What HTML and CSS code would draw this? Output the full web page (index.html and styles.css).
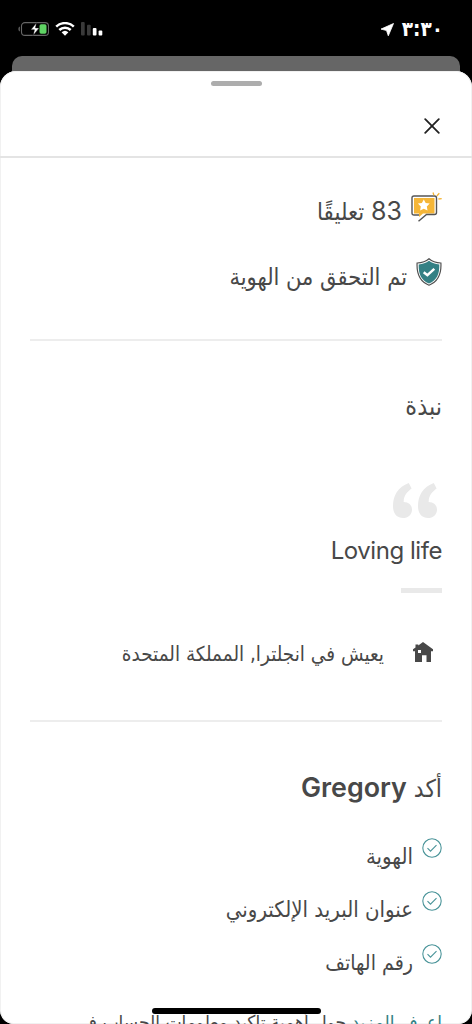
FILE: index.html
```
<!DOCTYPE html>
<html lang="ar" dir="rtl">
<head>
  <meta charset="UTF-8" />
  <meta name="viewport" content="width=device-width, initial-scale=1.0"/>
  <title>Gregory</title>
  <link rel="stylesheet" href="styles.css">
</head>
<body>
  <div class="status-bar" dir="ltr">
    <div class="status-left">
      <svg class="battery" width="31" height="14" viewBox="0 0 31 14">
        <path d="M2 4.500v5C.6 9 .3 8 .3 7S.6 5 2 4.500z" fill="#555"/>
        <rect x="3.500" y=".6" width="27" height="12.800" rx="3.500" fill="none" stroke="#666" stroke-width="1.100"/>
        <rect x="21.500" y="2.300" width="7" height="9.400" rx="1.600" fill="#5fd364"/>
        <path d="M18.500.8 12.800 7.800h3.600l-1.200 5.600 6-7.500h-3.700z" fill="#fff" stroke="#000" stroke-width=".5"/>
      </svg>
      <svg class="wifi" width="20" height="14" viewBox="0 0 20 14">
        <path d="M1.200 4.700a12.600 12.600 0 0 1 17.600 0M4.300 8a8.200 8.200 0 0 1 11.400 0" fill="none" stroke="#fff" stroke-width="2.500"/>
        <path d="M6.600 10.300a5 5 0 0 1 6.800 0L10 13.700z" fill="#fff"/>
      </svg>
      <svg class="signal" width="22" height="14" viewBox="0 0 22 14">
        <rect x="0" y="0" width="3.700" height="13.500" rx="1" fill="#3a3a3a"/>
        <rect x="6" y="2.800" width="3.700" height="10.700" rx="1" fill="#3a3a3a"/>
        <rect x="11.800" y="6" width="3.700" height="7.500" rx="1" fill="#fff"/>
        <rect x="17.600" y="8.500" width="3.700" height="5" rx="1" fill="#fff"/>
      </svg>
    </div>
    <div class="status-right">
      <svg class="location" width="13" height="13" viewBox="0 0 13 13"><path d="M12.500.5 0 6.100l5.500 1.400L7.300 12.800z" fill="#fff" stroke="#fff" stroke-width=".8" stroke-linejoin="round"/></svg>
      <span class="time">٣:٣٠</span>
    </div>
  </div>

  <div class="back-sheet"></div>

  <main class="sheet">
    <header class="sheet-header">
      <div class="grabber"></div>
      <button class="close" aria-label="إغلاق">
        <svg width="16" height="16" viewBox="0 0 16 16"><path d="M1.200 1.200l13.600 13.600M14.800 1.200 1.200 14.800" stroke="#222" stroke-width="1.800" stroke-linecap="round"/></svg>
      </button>
    </header>

    <section class="summary">
      <div class="summary-row">
        <svg class="review-icon" width="31" height="30" viewBox="0 0 31 30">
          <path d="M3 5h20.500v15.500H12l-4 3.500v-3.500H3z" fill="#f5b638"/>
          <path d="M8 22v0H3q-2 0-2-2V5q0-2 2-2h20.500q2 0 2 2V19.500q0 2-2 2H15.500L7.500 28.300" fill="none" stroke="#555" stroke-width="1.400"/>
          <path d="M12.800 6.400l1.900 3.600 4 .6-2.900 2.900.7 4-3.700-1.800-3.700 1.800.7-4-2.900-2.900 4-.6z" fill="#fff"/>
          <path d="M22 -.5l.9 2.800M28.300.2 25.800 3M30.700 5.600l-3.300.4" stroke="#f5b638" stroke-width="1.300"/>
        </svg>
        <span class="label reviews"><span class="num">83</span> تعليقًا</span>
      </div>
      <div class="summary-row">
        <svg class="shield-icon" width="26" height="28" viewBox="0 0 26 28">
          <path d="M13 .8c3 2.700 7 4 11.900 4.200C25.500 16 22.500 23.500 13 27.200 3.500 23.500.5 16 1.100 5 6 4.800 10 3.500 13 .8z" fill="#fff" stroke="#505050" stroke-width="1.200"/>
          <path d="M13 2.800c2.900 2.300 6.400 3.400 10.300 3.600.2 9.800-2.400 15.700-10.300 19-7.900-3.300-10.500-9.200-10.300-19C6.600 6.200 10.100 5.100 13 2.800z" fill="#348084"/>
          <path d="M7.700 14.200l3.700 3 6.900-6.300" fill="none" stroke="#fff" stroke-width="2.400"/>
        </svg>
        <span class="label verified">تم التحقق من الهوية</span>
      </div>
    </section>

    <section class="about">
      <h2 class="about-title">نبذة</h2>
      <svg class="quote-mark" width="45" height="36" viewBox="0 0 45 36">
        <path id="q" d="M15.800 0C5 4 0 12.500 0 23c0 8 4 12 10 12 5 0 9-3.600 9-8.300 0-5-3.600-7.600-8.300-7.800C10.500 13 14 9 18.600 5.500z" fill="#e9e9e9"/>
        <use href="#q" x="25"/>
      </svg>
      <p class="quote" dir="ltr">Loving life</p>
      <div class="quote-bar"></div>
      <div class="lives">
        <svg width="20" height="20" viewBox="0 0 20 20">
          <path d="M10 0 20 7.300V9.200h-2V20h-4.500v-6.700H9V20H2V9.200H0V7.300L2.500 5.500V2.500h2.800v1z" fill="#484848"/>
          <rect x="5" y="8" width="3" height="3" fill="#fff"/>
        </svg>
        <span class="label city">يعيش في انجلترا, المملكة المتحدة</span>
      </div>
    </section>

    <section class="confirmed">
      <h2 class="confirmed-title">أكد <span class="name">Gregory</span></h2>
      <ul class="checks">
        <li>
          <svg width="20" height="20" viewBox="0 0 20 20"><circle cx="10" cy="10" r="9.200"/><path d="M5.500 10.200l3 3 6-6"/></svg>
          <span class="label id">الهوية</span>
        </li>
        <li>
          <svg width="20" height="20" viewBox="0 0 20 20"><circle cx="10" cy="10" r="9.200"/><path d="M5.500 10.200l3 3 6-6"/></svg>
          <span class="label email">عنوان البريد الإلكتروني</span>
        </li>
        <li>
          <svg width="20" height="20" viewBox="0 0 20 20"><circle cx="10" cy="10" r="9.200"/><path d="M5.500 10.200l3 3 6-6"/></svg>
          <span class="label phone">رقم الهاتف</span>
        </li>
      </ul>
      <p class="learn"><a>اعرف المزيد</a> حول أهمية تأكيد معلومات الحساب في</p>
    </section>
  </main>

  <div class="home-indicator"></div>
</body>
</html>
```

FILE: styles.css
```
* {
  box-sizing: border-box;
}
body {
  font-family: "DejaVu Sans Condensed", "DejaVu Sans", sans-serif;
  background: #000;
  color: #484848;
  margin: 0;
  height: 1024px;
  overflow: hidden;
  position: relative;
}
h2, p, ul {
  margin: 0;
  padding: 0;
  font-weight: normal;
}
svg {
  display: block;
  flex: none;
}

/* status bar */
.status-bar {
  height: 56px;
  padding: 22px 29px 0 18px;
  display: flex;
  justify-content: space-between;
  align-items: flex-start;
}
.status-left {
  display: flex;
}
.wifi {
  margin-left: 6px;
}
.signal {
  margin-left: 6px;
}
.status-right {
  display: flex;
  gap: 8px;
}
.location {
  margin-top: 1px;
}
.time {
  color: #fff;
  font-size: 20.5px;
  font-weight: bold;
  line-height: 14px;
}

/* sheets */
.back-sheet {
  height: 15px;
  margin: 0 12px;
  background: #666;
  border-radius: 10px 10px 0 0;
}
.sheet {
  height: 953px;
  background: #fff;
  border-radius: 16px 16px 14px 14px;
  overflow: hidden;
  box-shadow: inset 0 0 0 1px #f1f1f1;
}
.sheet-header {
  height: 87px;
  border-bottom: 2px solid #e4e4e4;
  padding-top: 10px;
}
.grabber {
  width: 51px;
  height: 5px;
  border-radius: 3px;
  background: #adadad;
  margin: 0 auto;
}
.close {
  display: block;
  border: none;
  background: none;
  padding: 0;
  margin: 32px 32px 0 0;
}
section {
  margin: 0 30px;
}
.label {
  font-size: 22px;
  line-height: 30px;
  white-space: nowrap;
}

.summary {
  height: 183px;
  border-bottom: 2px solid #ededed;
  padding-top: 35px;
}
.summary-row {
  display: flex;
  gap: 9px;
  height: 66px;
}
.review-icon {
  overflow: visible;
}
.num {
  font-family: Inter, sans-serif;
  font-size: 25px;
  letter-spacing: -0.5px;
}
.reviews {
  font-size: 23.8px;
  margin-top: 3px;
}
.shield-icon {
  margin-top: -1px;
}
.verified {
  font-size: 23.4px;
  margin-top: 3px;
}

.about {
  height: 381px;
  border-bottom: 2px solid #ededed;
  padding-top: 51px;
}
.about-title {
  font-size: 25px;
  line-height: 30px;
}
.quote-mark {
  margin: 61px 4px 0 0;
}
.quote {
  font-family: Inter, sans-serif;
  font-size: 24px;
  letter-spacing: -0.45px;
  line-height: 30px;
  text-align: right;
  margin-top: 17px;
}
.quote-bar {
  width: 41px;
  height: 5px;
  background: #e9e9e9;
  margin-top: 22px;
}
.lives {
  display: flex;
  gap: 29px;
  padding: 49px 9px 0 0;
}
.city {
  font-size: 20.5px;
  margin-top: -3px;
}

.confirmed {
  padding-top: 50px;
}
.confirmed-title {
  font-size: 24.5px;
  line-height: 30px;
}
.name {
  font-family: Inter, sans-serif;
  font-size: 26.8px;
  font-weight: 600;
}
.checks {
  list-style: none;
  margin-top: 34px;
}
.checks li {
  display: flex;
  gap: 9px;
  height: 53px;
}
.checks svg {
  fill: none;
  stroke: #4a9499;
  stroke-width: 1.100;
}
.checks .label {
  margin-top: 4px;
}
.checks .phone {
  font-size: 21.2px;
}
.learn {
  font-size: 19px;
  line-height: 30px;
  margin-top: 10px;
  white-space: nowrap;
}
.learn a {
  color: #348084;
}

.home-indicator {
  position: absolute;
  left: 152px;
  top: 1008px;
  width: 169px;
  height: 6px;
  border-radius: 3px;
  background: #000;
}
```
